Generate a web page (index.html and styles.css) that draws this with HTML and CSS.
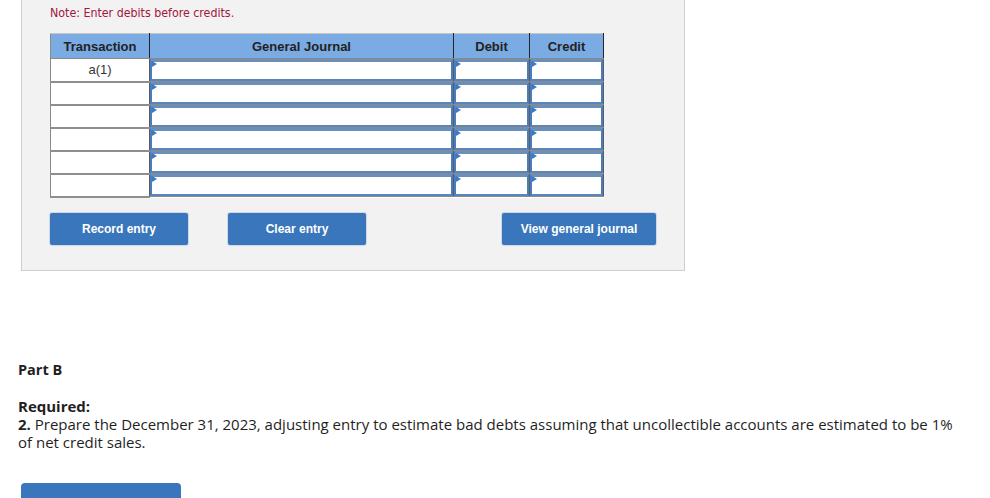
FILE: index.html
```html
<!DOCTYPE html>
<html>
<head>
<meta charset="utf-8">
<link rel="stylesheet" href="styles.css">
</head>
<body>
<div class="panel">
  <p class="note">Note: Enter debits before credits.</p>
  <table class="journal">
    <thead>
      <tr>
        <th class="c-tr">Transaction</th>
        <th class="c-gj">General Journal</th>
        <th class="c-dr">Debit</th>
        <th class="c-cr">Credit</th>
      </tr>
    </thead>
    <tbody>
      <tr><td class="tr">a(1)</td><td class="in"><div class="field"></div></td><td class="in"><div class="field"></div></td><td class="in"><div class="field"></div></td></tr>
      <tr><td class="tr"></td><td class="in"><div class="field"></div></td><td class="in"><div class="field"></div></td><td class="in"><div class="field"></div></td></tr>
      <tr><td class="tr"></td><td class="in"><div class="field"></div></td><td class="in"><div class="field"></div></td><td class="in"><div class="field"></div></td></tr>
      <tr><td class="tr"></td><td class="in"><div class="field"></div></td><td class="in"><div class="field"></div></td><td class="in"><div class="field"></div></td></tr>
      <tr><td class="tr"></td><td class="in"><div class="field"></div></td><td class="in"><div class="field"></div></td><td class="in"><div class="field"></div></td></tr>
      <tr><td class="tr"></td><td class="in"><div class="field"></div></td><td class="in"><div class="field"></div></td><td class="in"><div class="field"></div></td></tr>
    </tbody>
  </table>
  <div class="actions">
    <button class="btn btn-record">Record entry</button>
    <button class="btn btn-clear">Clear entry</button>
    <button class="btn btn-view">View general journal</button>
  </div>
</div>

<div class="partb">
  <h3 class="part-title">Part B</h3>
  <p class="req"><strong>Required:</strong><br><strong>2.</strong> Prepare the December 31, 2023, adjusting entry to estimate bad debts assuming that uncollectible accounts are estimated to be 1% of net credit sales.</p>
  <div class="next-btn"></div>
</div>
</body>
</html>
```

FILE: styles.css
```css
html, body {
  margin: 0;
  padding: 0;
  background: #fff;
}

body {
  font-family: "Liberation Sans", Arial, sans-serif;
  color: #222;
  width: 990px;
  height: 498px;
  overflow: hidden;
}

.panel {
  margin-left: 21px;
  width: 664px;
  background: #f2f2f2;
  border: 1px solid #cfcfcf;
  border-top: none;
  padding: 6px 0 25px 28px;
  box-sizing: border-box;
}

.note {
  margin: 0;
  font-family: "DejaVu Sans Condensed", "DejaVu Sans", sans-serif;
  font-size: 12.3px;
  line-height: 14px;
  color: #a3163c;
}

.journal {
  margin-top: 13px;
  border-collapse: collapse;
  table-layout: fixed;
  width: 553px;
  background: #fff;
}

.journal th {
  background: #7aabe2;
  font-weight: bold;
  font-size: 13px;
  color: #222;
  height: 24px;
  padding: 0;
  border-top: 1px solid #c4c4c4;
  border-left: 1px solid #262626;
  border-right: 1px solid #262626;
  border-bottom: 1px solid #8a8a8a;
  text-align: center;
}

.journal th.c-tr { width: 98px; border-left: 1px solid #8a8a8a; }
.journal th.c-gj { width: 303px; }
.journal th.c-dr { width: 75px; }
.journal th.c-cr { width: 73px; }

.journal td {
  height: 23px;
  padding: 0;
  box-sizing: border-box;
}

.journal td.tr {
  border: 1px solid #8a8a8a;
  border-bottom: 2px solid #8e8e8e;
  border-right: 1px solid #5a5a5a;
  font-size: 13px;
  color: #333;
  text-align: center;
  vertical-align: middle;
}

.journal td.in {
  border-left: 1px solid #5d5d5d;
  border-right: 1px solid #5d5d5d;
  border-top: 1px solid #8a8a8a;
  border-bottom: 1px solid #8a8a8a;
  background: #fff;
}

.field {
  position: relative;
  height: 22px;
  box-sizing: border-box;
  border-top: 3px solid #6b8fbb;
  border-left: 2px solid #4a7dc0;
  border-right: 2px solid #4a7dc0;
  border-bottom: 2px solid #5a86c0;
  background: #fff;
}

.field::before {
  content: "";
  position: absolute;
  left: 0;
  top: -1px;
  width: 0;
  height: 0;
  border-top: 3px solid transparent;
  border-bottom: 3px solid transparent;
  border-left: 5px solid #3a78c8;
}

.actions {
  display: flex;
  margin-top: 15px;
}

.btn {
  height: 32px;
  border: none;
  border-radius: 2px;
  background: #3a76bb;
  color: #fff;
  font-family: "Liberation Sans", Arial, sans-serif;
  font-weight: bold;
  font-size: 12px;
  padding: 0;
  box-shadow: 0 0 0 1px #cdd9e8;
}

.btn-record { width: 138px; }
.btn-clear { width: 138px; margin-left: 40px; }
.btn-view { width: 154px; margin-left: 136px; }

.partb {
  padding: 90px 24px 0 18px;
  font-family: "Open Sans", Lato, sans-serif;
  color: #1f1f1f;
}

.part-title {
  margin: 0;
  font-size: 14.5px;
  line-height: 18px;
  font-weight: bold;
}

.req {
  margin: 18px 0 0 0;
  font-size: 15px;
  line-height: 18px;
}

.req strong {
  font-weight: bold;
}

.next-btn {
  margin-top: 32px;
  margin-left: 3px;
  width: 160px;
  height: 20px;
  background: #3a76bb;
  border-radius: 4px 4px 0 0;
}
```
